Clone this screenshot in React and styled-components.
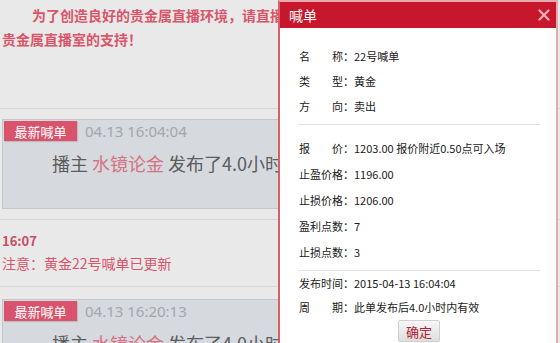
import React from "react";
import styled, {createGlobalStyle} from "styled-components";

const GlobalStyle = createGlobalStyle`
    html, body {
        margin: 0;
        padding: 0;
        background: #e9e9e9;
        font-family: "Noto Sans CJK SC", "Liberation Sans", sans-serif;
    }
`;

const Page = styled.div`
    position: relative;
    width: 560px;
    height: 343px;
    overflow: hidden;
    background: #e9e9e9;
`;

const Feed = styled.div`
    display: flex;
    flex-direction: column;
    width: 560px;
`;

const Notice = styled.div`
    height: 105px;
    padding: 3px 0 0 2px;
    border-bottom: 1px solid #d8d8d8;
    color: #d9566a;
    font-size: 14px;
    font-weight: 700;
    line-height: 24px;
    white-space: nowrap;
    box-sizing: content-box;
`;

const NoticeLine = styled.div`
    padding-left: ${p => (p.indent ? "30px" : "0")};
`;

const Item = styled.div`
    padding: ${p => p.pad || "10px 0 10px 2px"};
    border-bottom: 1px solid #d8d8d8;
`;

const Card = styled.div`
    width: 330px;
    height: 88px;
    background: #d6d9de;
    border: 1px solid #c4c8cd;
`;

const CardHead = styled.div`
    display: flex;
    align-items: center;
    gap: 8px;
    padding: 1px 0 0 1px;
`;

const Tag = styled.span`
    display: inline-flex;
    align-items: center;
    justify-content: center;
    width: 73px;
    height: 20px;
    background: #d8536b;
    color: #fff;
    font-size: 13px;
    box-shadow: 1px 1px 1px rgba(0, 0, 0, 0.12);
`;

const Stamp = styled.span`
    font-family: "Noto Sans", "Liberation Sans", sans-serif;
    font-size: 15px;
    line-height: 18px;
    color: #a3a7ac;
`;

const Message = styled.div`
    margin-top: 10px;
    padding-left: 49px;
    font-size: 18px;
    line-height: 24px;
    color: #5b5d60;
    white-space: nowrap;
`;

const Host = styled.span`
    color: #d57384;
`;

const Time = styled.div`
    font-size: 13px;
    font-weight: 700;
    color: #c64f62;
    line-height: 22px;
    margin-top: 4px;
`;

const Warn = styled.div`
    font-size: 14px;
    color: #d9566a;
    line-height: 22px;
    margin-bottom: 12px;
`;

const Modal = styled.div`
    position: absolute;
    left: 278px;
    top: 0;
    width: 276px;
    height: 370px;
    background: #fff;
    border: 2px solid #e8a9ae;
    border-left-color: #d4606c;
`;

const Header = styled.div`
    display: flex;
    align-items: center;
    justify-content: space-between;
    height: 26px;
    padding: 0 6px 0 9px;
    background: #c7172c;
    color: #fff;
    font-size: 14px;
`;

const Close = styled.svg`
    width: 12px;
    height: 12px;
`;

const Body = styled.div`
    padding: 15px 16px 0 18px;
    font-size: 11px;
    color: #1a1a1a;
`;

const Row = styled.div`
    display: flex;
    align-items: center;
    height: ${p => p.h}px;
    padding-left: 1px;
    white-space: nowrap;
`;

const Label = styled.span`
    display: flex;
    justify-content: space-between;
    width: 55px;
    flex-shrink: 0;
`;

const Value = styled.span``;

const Rule = styled.div`
    height: 1px;
    background: #e1e1e1;
    margin: ${p => p.m};
`;

const Actions = styled.div`
    display: flex;
    justify-content: center;
    margin-top: 1px;
`;

const Button = styled.button`
    width: 42px;
    height: 22px;
    padding: 0;
    border: 1px solid #cfcfcf;
    border-radius: 2px;
    background: linear-gradient(#f7f7f7, #dedede);
    color: #b0202e;
    font-family: "Noto Sans CJK SC", sans-serif;
    font-size: 13px;
    cursor: pointer;
`;

const details = [
    {h: 26, label: ["报", "价："], value: "1203.00 报价附近0.50点可入场"},
    {h: 26, label: ["止盈价格："], value: "1196.00"},
    {h: 26, label: ["止损价格："], value: "1206.00"},
    {h: 26, label: ["盈利点数："], value: "7"},
    {h: 26, label: ["止损点数："], value: "3"},
];

function Field({h, label, value}) {
    return (
        <Row h={h}>
            <Label>{label.map((l) => <span key={l}>{l}</span>)}</Label>
            <Value>{value}</Value>
        </Row>
    );
}

function CallCard({time}) {
    return (
        <Card>
            <CardHead>
                <Tag>最新喊单</Tag>
                <Stamp>{time}</Stamp>
            </CardHead>
            <Message>播主 <Host>水镜论金</Host> 发布了4.0小时内有效的喊单</Message>
        </Card>
    );
}

export default function App() {
    return (
        <Page>
            <GlobalStyle />
            <Feed>
                <Notice>
                    <NoticeLine indent>为了创造良好的贵金属直播环境，请直播间的朋友们文明发言，感谢大家对</NoticeLine>
                    <NoticeLine>贵金属直播室的支持！</NoticeLine>
                </Notice>
                <Item>
                    <CallCard time="04.13 16:04:04" />
                </Item>
                <Item pad="6px 0 0 2px">
                    <Time>16:07</Time>
                    <Warn>注意：黄金22号喊单已更新</Warn>
                </Item>
                <Item pad="12px 0 10px 2px">
                    <CallCard time="04.13 16:20:13" />
                </Item>
            </Feed>

            <Modal>
                <Header>
                    <span>喊单</span>
                    <Close viewBox="0 0 12 12">
                        <path d="M1.5 1.5 L10.5 10.5 M10.5 1.5 L1.5 10.5" stroke="#f6b1b6" strokeWidth="2.2" strokeLinecap="round" />
                    </Close>
                </Header>
                <Body>
                    <Field h={25} label={["名", "称："]} value="22号喊单" />
                    <Field h={25} label={["类", "型："]} value="黄金" />
                    <Field h={25} label={["方", "向："]} value="卖出" />
                    <Rule m="6px 0 10px" />
                    {details.map((d) => <Field key={d.label.join("")} {...d} />)}
                    <Rule m="5px 0 0" />
                    <Field h={24} label={["发布时间："]} value="2015-04-13 16:04:04" />
                    <Field h={24} label={["周", "期："]} value="此单发布后4.0小时内有效" />
                    <Actions>
                        <Button>确定</Button>
                    </Actions>
                </Body>
            </Modal>
        </Page>
    );
}
